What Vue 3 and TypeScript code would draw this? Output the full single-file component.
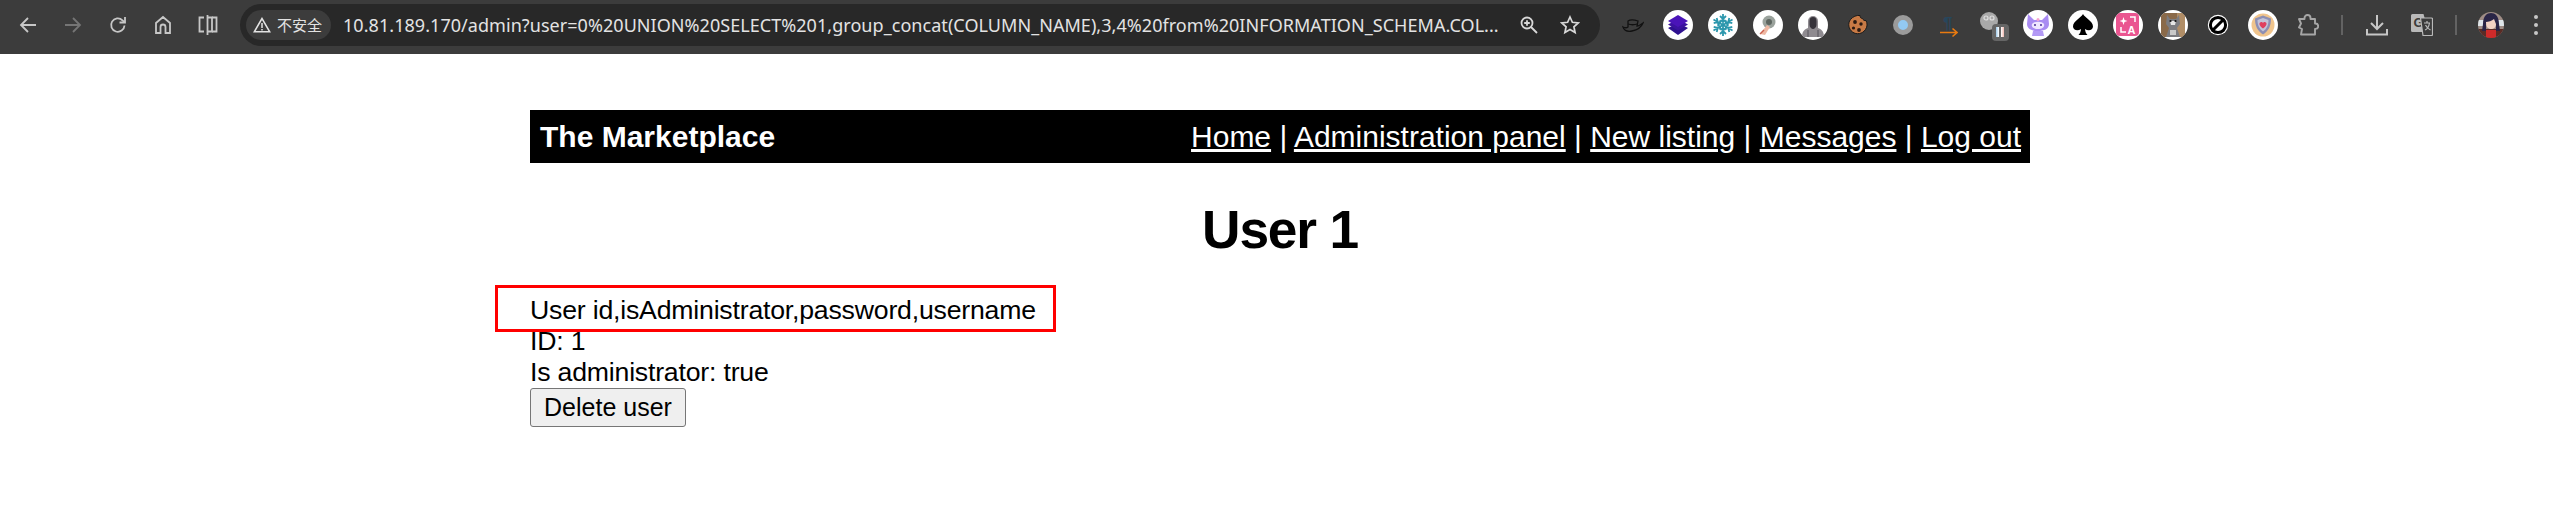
<script setup lang="ts">
const navLinks = ['Home', 'Administration panel', 'New listing', 'Messages', 'Log out']
const url =
  '10.81.189.170/admin?user=0%20UNION%20SELECT%201,group_concat(COLUMN_NAME),3,4%20from%20INFORMATION_SCHEMA.COL...'
const flakeArms = [0, 60, 120, 180, 240, 300]
</script>

<template>
  <div class="page">
    <header class="chrome">
      <div class="nav-btns">
        <span class="btn">
          <svg width="20" height="20" viewBox="0 0 20 20" fill="none" stroke="#c7c7c7" stroke-width="1.8">
            <path d="M18 10H3M10 3l-7 7 7 7" />
          </svg>
        </span>
        <span class="btn">
          <svg width="20" height="20" viewBox="0 0 20 20" fill="none" stroke="#757575" stroke-width="1.8">
            <path d="M2 10h15M10 3l7 7-7 7" />
          </svg>
        </span>
        <span class="btn">
          <svg width="20" height="20" viewBox="0 0 20 20" fill="none" stroke="#c7c7c7" stroke-width="1.8">
            <path d="M16.5 10.5a6.7 6.7 0 1 1-2-5.2l2 1.9" />
            <path d="M17 2v5.5h-5.5" />
          </svg>
        </span>
        <span class="btn">
          <svg width="20" height="20" viewBox="0 0 20 20" fill="none" stroke="#c7c7c7" stroke-width="1.8">
            <path d="M3 18V8l7-6 7 6v10h-4.5v-6a2.5 2.5 0 0 0-5 0v6z" />
          </svg>
        </span>
        <span class="btn">
          <svg width="22" height="22" viewBox="0 0 22 22" fill="none" stroke="#c7c7c7" stroke-width="1.8">
            <path d="M7 3.5H2.500v14H7M15 3.500h4.500v14H15" />
            <path d="M10.500 1v20" />
            <path d="M10.500 3.500H15v14h-4.500" />
          </svg>
        </span>
      </div>

      <div class="omnibox">
        <span class="chip">
          <svg width="18" height="16" viewBox="0 0 18 16" fill="none" stroke="#e3e3e3" stroke-width="1.5">
            <path d="M9 1.500 1.300 14.800h15.400z" />
            <path d="M9 6v5M9 12v1.500" />
          </svg>
          <span class="chip-text">不安全</span>
        </span>
        <span class="url">{{ url }}</span>
        <span class="omni-icon">
          <svg width="20" height="20" viewBox="0 0 20 20" fill="none" stroke="#d8d8d8" stroke-width="1.8">
            <circle cx="8" cy="8" r="5.500" />
            <path d="M12 12l6 6M8 5.200v5.600M5.200 8h5.600" />
          </svg>
        </span>
        <span class="omni-icon">
          <svg width="20" height="20" viewBox="0 0 20 20" fill="none" stroke="#d8d8d8" stroke-width="1.7">
            <path d="M10 2l2.400 5.300 5.800.6-4.300 3.900 1.200 5.700L10 14.600l-5.100 2.900 1.200-5.700L1.800 7.900l5.800-.6z" />
          </svg>
        </span>
      </div>

      <div class="extensions">
        <!-- hat -->
        <span class="ext">
          <svg width="22" height="16" viewBox="0 0 22 16" fill="none" stroke="#111" stroke-width="1.300">
            <path d="M1 10c3 1.500 5 0 5 0V4c3-2 7-1 10 0l-1 5c2 0 4-1.500 6-3-2 5-6 7-11 8-5 1-8-1-9-4z" />
            <path d="M6 7c3 1 6 1 9.500 0" />
          </svg>
        </span>
        <!-- layers -->
        <span class="ext">
          <span class="bubble">
            <svg width="22" height="22" viewBox="0 0 22 22">
              <path d="M11 9 21 14 11 21 1 14z" fill="#2f1190" />
              <path d="M11 5 21 10.500 11 16.500 1 10.500z" fill="#3b12a0" />
              <path d="M11 1 21 7 11 13 1 7z" fill="#4a14b8" />
            </svg>
          </span>
        </span>
        <!-- snowflake -->
        <span class="ext">
          <span class="bubble">
            <svg width="24" height="24" viewBox="-12 -12 24 24" stroke="#2c97ad" stroke-width="1.800" fill="none">
              <g v-for="a in flakeArms" :key="a" :transform="`rotate(${a})`">
                <path d="M0 0V-11M-3-9 0-6 3-9M-2.500-5 0-3 2.500-5" />
              </g>
            </svg>
          </span>
        </span>
        <!-- globe and hand -->
        <span class="ext">
          <span class="bubble">
            <svg width="24" height="24" viewBox="0 0 24 24">
              <circle cx="13" cy="9" r="6.500" fill="#9aa29c" />
              <circle cx="13" cy="9" r="3" fill="#5d6660" />
              <path d="M4 21 11 12l3 2-5 8z" fill="#eeb9a4" />
              <path d="M4 21l4-4" stroke="#c9604e" stroke-width="1.500" />
            </svg>
          </span>
        </span>
        <!-- hooded figure -->
        <span class="ext">
          <span class="bubble">
            <svg width="26" height="26" viewBox="0 0 26 26">
              <path d="M2 25c0-6 3-8 6-9V9a5 5 0 0 1 10 0v7c3 1 6 3 6 9z" fill="#8f8b90" />
              <path d="M9.500 9a3.500 4 0 0 1 7 0v4c0 2-2 4-3.500 4s-3.500-2-3.500-4z" fill="#36333a" />
              <path d="M8 18v7M18 18v7" stroke="#55525a" stroke-width="1" />
            </svg>
          </span>
        </span>
        <!-- cookie -->
        <span class="ext">
          <svg width="22" height="22" viewBox="0 0 22 22">
            <path
              d="M13 1.500c0 2 1 3 2.500 3 .5 1.500 2 2.500 3.500 2 1.500 3 1.500 6-.5 9-3 4.500-9 5.500-13 2.500S.5 9.500 3.500 5.500C6 2.500 9.500 1 13 1.500z"
              fill="#c87a45"
              stroke="#1a1a1a"
              stroke-width="1"
            />
            <circle cx="8" cy="8" r="1.900" fill="#2a1a12" />
            <circle cx="14" cy="10" r="1.700" fill="#2a1a12" />
            <circle cx="6.500" cy="14" r="1.600" fill="#2a1a12" />
            <circle cx="12" cy="16" r="1.900" fill="#2a1a12" />
          </svg>
        </span>
        <!-- ring -->
        <span class="ext">
          <span class="ring"></span>
        </span>
        <!-- pilcrow arrow -->
        <span class="ext">
          <svg width="20" height="26" viewBox="0 0 20 26">
            <text x="5" y="17" class="pilcrow">¶</text>
            <path d="M2 20.500h17M14.500 16.500l4.500 4-4.500 4" fill="none" stroke="#e87a10" stroke-width="1.600" />
          </svg>
        </span>
        <!-- paused extension -->
        <span class="ext">
          <span class="paused">
            <svg width="18" height="18" viewBox="0 0 18 18">
              <circle cx="9" cy="9" r="9" fill="#a9a9a9" />
              <circle cx="6" cy="6" r="2" fill="none" stroke="#e0e0e0" stroke-width="1.200" />
              <circle cx="12" cy="6" r="2" fill="none" stroke="#e0e0e0" stroke-width="1.200" />
            </svg>
            <span class="pause-badge">
              <i class="bar bar-blue"></i>
              <i class="bar bar-red"></i>
            </span>
          </span>
        </span>
        <!-- kuromi -->
        <span class="ext">
          <span class="bubble">
            <svg width="26" height="26" viewBox="0 0 26 26">
              <path d="M3 2 9 8h8l6-6 1 10c0 5-5 7-11 7S2 17 2 12z" fill="#a98bf2" />
              <path d="M7 12c2-3 10-3 12 0 1 3-2 5-6 5s-7-2-6-5z" fill="#efe6ff" />
              <circle cx="10" cy="13" r="1" fill="#4a2d99" />
              <circle cx="16" cy="13" r="1" fill="#4a2d99" />
              <path d="M8 19h10l1 5H7z" fill="#b39af5" />
              <circle cx="13" cy="7.500" r="1.500" fill="#f6a5d0" />
            </svg>
          </span>
        </span>
        <!-- spade -->
        <span class="ext">
          <span class="bubble">
            <svg width="22" height="24" viewBox="0 0 22 24">
              <path
                d="M11 1c2 4 10 7 10 12.500 0 3.500-4.500 5-8 2.500.2 2.500 1 4.500 2.500 6h-9c1.500-1.500 2.300-3.500 2.500-6-3.500 2.500-8 1-8-2.500C1 8 9 5 11 1z"
                fill="#000"
              />
            </svg>
          </span>
        </span>
        <!-- pink translate -->
        <span class="ext">
          <span class="bubble">
            <span class="pink-tile">
              <svg width="20" height="20" viewBox="0 0 20 20">
                <path d="M5.500 2l1 3 3 1-3 1-1 3-1-3-3-1 3-1z" fill="#fff" />
                <path d="M12 2h5v5M3 12v5h5" fill="none" stroke="#fff" stroke-width="1.500" />
                <text x="9.500" y="18.500" class="tile-a">A</text>
              </svg>
            </span>
          </span>
        </span>
        <!-- cat photo -->
        <span class="ext">
          <span class="bubble">
            <svg width="24" height="24" viewBox="0 0 24 24">
              <rect width="24" height="24" fill="#8a6a4a" />
              <rect x="16" width="8" height="24" fill="#b08d66" />
              <path d="M6 2l3 4h6l3-4 1 9-3 4 3 9H5l3-9-3-4z" fill="#7c7c80" />
              <path d="M9 8h6l-1 4h-4z" fill="#e6e6e6" />
              <circle cx="9.500" cy="8" r="1.100" fill="#111" />
              <circle cx="14.500" cy="8" r="1.100" fill="#111" />
              <rect x="9" y="17" width="6" height="5" fill="#c9c9c9" />
            </svg>
          </span>
        </span>
        <!-- no entry -->
        <span class="ext">
          <svg width="22" height="22" viewBox="0 0 22 22" fill="none">
            <circle cx="11" cy="11" r="10.200" fill="#fff" />
            <circle cx="11" cy="11" r="7.600" stroke="#000" stroke-width="3" />
            <path d="M6 16 16 6" stroke="#000" stroke-width="3" />
          </svg>
        </span>
        <!-- shield -->
        <span class="ext">
          <span class="bubble">
            <svg width="24" height="24" viewBox="0 0 24 24">
              <circle cx="12" cy="12" r="11.500" fill="#f0c48c" />
              <path d="M12 2.500 20 5.500c0 7-2 12-8 16-6-4-8-9-8-16z" fill="#8d8fb4" />
              <path d="M12 5 17.500 7c0 5-1.500 8.500-5.500 11.500C8 15.500 6.500 12 6.500 7z" fill="#c4c4d8" />
              <path d="M12 15.500c-4-3-4-5-3-6s2.500-.5 3 .5c.5-1 2-1.500 3-.5s1 3-3 6z" fill="#e0405f" />
            </svg>
          </span>
        </span>
        <!-- puzzle -->
        <span class="ext">
          <svg width="22" height="22" viewBox="0 0 22 22" fill="none" stroke="#a6a6a6" stroke-width="1.900">
            <path
              d="M2 5h5.500V4a3 3 0 0 1 6 0v1H18v4.500h.5a2.700 2.700 0 0 1 0 5.400H18V20.500H4l1-5.500-3-1.500 2-4z"
              stroke-linejoin="round"
            />
          </svg>
        </span>
        <span class="sep"></span>
        <!-- download -->
        <span class="ext">
          <svg width="22" height="22" viewBox="0 0 22 22" fill="none" stroke="#c7c7c7" stroke-width="2">
            <path d="M11 1v13M5 9l6 6 6-6M1 15v5.500h20V15" />
          </svg>
        </span>
        <!-- google translate -->
        <span class="ext">
          <svg width="22" height="22" viewBox="0 0 22 22">
            <path d="M1.500 0h11l5 18h-16A1.500 1.500 0 0 1 0 16.500v-15A1.500 1.500 0 0 1 1.500 0z" fill="#b9b9b9" />
            <text x="2.500" y="13" class="tr-g">G</text>
            <path d="M9.500 4h11a1 1 0 0 1 1 1v15.500a1 1 0 0 1-1 1H12z" fill="#3c3c3c" stroke="#b9b9b9" stroke-width="1.200" />
            <path d="M13 9h6M16 7v2M14 16c3-1 4-4 4.500-7M14.500 11c1 2 3 4 5 5" fill="none" stroke="#b9b9b9" stroke-width="1.200" />
          </svg>
        </span>
        <span class="sep"></span>
        <!-- avatar -->
        <span class="ext">
          <svg width="26" height="26" viewBox="0 0 26 26">
            <clipPath id="avatar-clip"><circle cx="13" cy="13" r="13" /></clipPath>
            <g clip-path="url(#avatar-clip)">
              <rect width="26" height="26" fill="#9f8d86" />
              <rect y="8" width="7" height="6" fill="#dfe6ea" />
              <rect x="20" y="8" width="6" height="6" fill="#dfe6ea" />
              <rect y="17" width="26" height="9" fill="#5a2c26" />
              <path d="M5 12C5 4 9 1 13 1s8 3 8 11l1 7h-4V12H8v7H4z" fill="#2a2547" />
              <path d="M8 10c2 0 6-1 8-3l2 5c0 3-2 5-5 5s-5-2-5-7z" fill="#f2d3c4" />
              <path d="M8 18h10v8H8z" fill="#d02a2a" />
            </g>
          </svg>
        </span>
        <!-- menu -->
        <span class="ext menu-dots">
          <i></i>
          <i></i>
          <i></i>
        </span>
      </div>
    </header>

    <main class="content">
      <nav class="navbar">
        <span class="brand">The Marketplace</span>
        <span class="links">
          <template v-for="(link, i) in navLinks" :key="link">
            <span v-if="i > 0"> | </span>
            <a href="#">{{ link }}</a>
          </template>
        </span>
      </nav>
      <h1 class="title">User 1</h1>
      <div class="details">
        <div class="mark"></div>
        <div>User id,isAdministrator,password,username</div>
        <div>ID: 1</div>
        <div>Is administrator: true</div>
        <button class="delete" type="button">Delete user</button>
      </div>
    </main>
  </div>
</template>

<style>
html,
body {
  background: #fff;
  overflow: hidden;
}
</style>

<style scoped>
.page {
  width: 2553px;
  height: 522px;
  font-family: 'Liberation Sans', Arial, sans-serif;
  color: #000;
}

.chrome {
  display: flex;
  align-items: center;
  height: 54px;
  padding-left: 5px;
  background: #3c3c3c;
  box-sizing: border-box;
}

.nav-btns {
  display: flex;
}

.btn,
.ext {
  display: flex;
  flex: none;
  align-items: center;
  justify-content: center;
  width: 45px;
  height: 45px;
}

.nav-btns {
  margin-top: -5px;
}

.omnibox {
  display: flex;
  flex: none;
  align-items: center;
  box-sizing: border-box;
  width: 1360px;
  height: 42px;
  margin-left: 10px;
  margin-top: -5px;
  padding-left: 6px;
  border-radius: 21px;
  background: #282828;
}

.chip {
  display: flex;
  flex: none;
  align-items: center;
  gap: 6px;
  box-sizing: border-box;
  width: 85px;
  height: 30px;
  padding-left: 7px;
  border-radius: 15px;
  background: #3c3c3c;
}

.chip-text {
  font-family: 'Noto Sans CJK SC', sans-serif;
  font-size: 15px;
  color: #e3e3e3;
}

.url {
  flex: none;
  width: 1165px;
  margin-left: 12px;
  font-family: 'Noto Sans', sans-serif;
  font-size: 18px;
  letter-spacing: 0.05px;
  color: #e3e3e3;
  white-space: nowrap;
}

.omni-icon {
  display: flex;
  flex: none;
  align-items: center;
  justify-content: center;
  width: 41px;
}

.extensions {
  display: flex;
  flex: none;
  align-items: center;
  margin-top: -5px;
  padding-left: 10px;
}

.bubble {
  display: flex;
  align-items: center;
  justify-content: center;
  width: 30px;
  height: 30px;
  border-radius: 50%;
  overflow: hidden;
  background: #fff;
}

.ring {
  box-sizing: border-box;
  width: 20px;
  height: 20px;
  border: 5px solid #9b9b9b;
  border-radius: 50%;
  background: #93c9f2;
}

.pilcrow {
  font-family: 'Liberation Sans', sans-serif;
  font-size: 17px;
  font-weight: 700;
  fill: #28465c;
}

.paused {
  position: relative;
  display: block;
  width: 26px;
  height: 26px;
}

.pause-badge {
  position: absolute;
  right: -3px;
  bottom: -3px;
  display: flex;
  align-items: center;
  justify-content: center;
  gap: 2px;
  width: 17px;
  height: 17px;
  border-radius: 4px;
  background: #666;
}

.bar {
  display: block;
  width: 3px;
  height: 10px;
}

.bar-blue {
  background: linear-gradient(90deg, #9ec8e8, #fff);
}

.bar-red {
  background: linear-gradient(90deg, #fff, #f0b8b0);
}

.pink-tile {
  display: flex;
  align-items: center;
  justify-content: center;
  width: 23px;
  height: 23px;
  border-radius: 4px;
  background: #ea5590;
}

.tile-a {
  font-family: 'Liberation Sans', sans-serif;
  font-size: 11px;
  font-weight: 700;
  fill: #fff;
}

.tr-g {
  font-family: 'Liberation Sans', sans-serif;
  font-size: 13px;
  font-weight: 700;
  fill: #3c3c3c;
}

.sep {
  flex: none;
  width: 2px;
  height: 20px;
  margin: 0 11px;
  background: #636363;
}

.menu-dots {
  flex-direction: column;
  gap: 4px;
}

.menu-dots i {
  display: block;
  width: 4px;
  height: 4px;
  border-radius: 50%;
  background: #c7c7c7;
}

.content {
  width: 1500px;
  margin: 56px 0 0 530px;
  font-size: 26.67px;
  line-height: 31px;
  letter-spacing: -0.2px;
}

.navbar {
  display: flex;
  align-items: center;
  justify-content: space-between;
  box-sizing: border-box;
  height: 53px;
  padding: 0 9px 0 10px;
  background: #000;
  color: #fff;
  font-size: 30px;
  letter-spacing: 0;
}

.brand {
  font-weight: 700;
}

.links {
  white-space: pre;
}

.links a {
  color: #fff;
  text-decoration: underline;
}

.title {
  margin: 0;
  padding-top: 36px;
  font-size: 53.3px;
  line-height: 62px;
  font-weight: 700;
  letter-spacing: -1.2px;
  text-align: center;
}

.details {
  position: relative;
  margin-top: 34px;
}

.mark {
  position: absolute;
  top: -10px;
  left: -35px;
  box-sizing: border-box;
  width: 561px;
  height: 47px;
  border: 3px solid #f00;
}

.delete {
  display: block;
  box-sizing: border-box;
  width: 156px;
  height: 39px;
  padding: 0;
  border: 1px solid #767676;
  border-radius: 3px;
  background: #efefef;
  font-family: inherit;
  font-size: 25px;
  letter-spacing: 0;
  color: #000;
}
</style>
